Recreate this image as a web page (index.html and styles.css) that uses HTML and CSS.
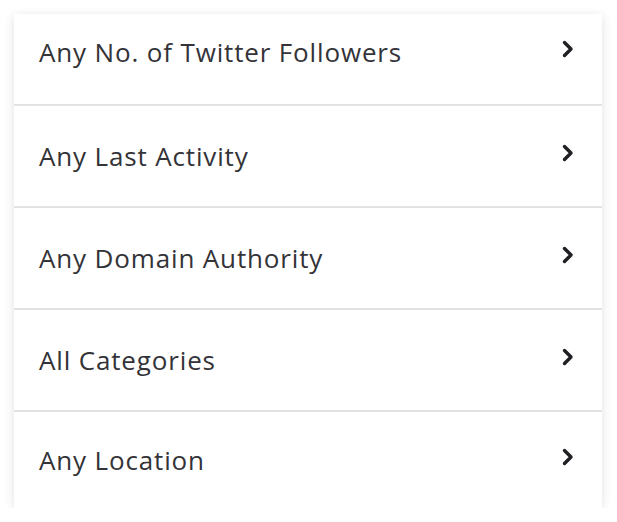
FILE: index.html
```html
<!DOCTYPE html>
<html>
<head>
<meta charset="utf-8">
<link rel="stylesheet" href="styles.css">
</head>
<body>
<ul class="filters">
  <li class="filter filter-first"><span class="label">Any No. of Twitter Followers</span><svg class="chev" viewBox="0 0 12 18"><path d="M2.5 2.5 L9 9 L2.5 15.5"/></svg></li>
  <li class="filter"><span class="label">Any Last Activity</span><svg class="chev" viewBox="0 0 12 18"><path d="M2.5 2.5 L9 9 L2.5 15.5"/></svg></li>
  <li class="filter"><span class="label">Any Domain Authority</span><svg class="chev" viewBox="0 0 12 18"><path d="M2.5 2.5 L9 9 L2.5 15.5"/></svg></li>
  <li class="filter"><span class="label">All Categories</span><svg class="chev" viewBox="0 0 12 18"><path d="M2.5 2.5 L9 9 L2.5 15.5"/></svg></li>
  <li class="filter filter-last"><span class="label">Any Location</span><svg class="chev" viewBox="0 0 12 18"><path d="M2.5 2.5 L9 9 L2.5 15.5"/></svg></li>
</ul>
</body>
</html>
```

FILE: styles.css
```css
html, body {
  margin: 0;
  padding: 0;
  background: #ffffff;
}
body {
  padding: 14px 15px 0 14px;
  font-family: "Open Sans", "Lato", sans-serif;
}
.filters {
  list-style: none;
  margin: 0;
  padding: 0;
  width: 588px;
  background: #ffffff;
  box-shadow: 0 2px 10px rgba(0, 0, 0, 0.12);
}
.filter {
  display: flex;
  align-items: center;
  justify-content: space-between;
  height: 100px;
  padding: 0 28px 0 25px;
  border-bottom: 2px solid #e2e2e2;
  box-sizing: content-box;
}
.filter-first {
  height: 76px;
  padding-bottom: 14px;
}
.filter-last {
  height: 96px;
  border-bottom: none;
}
.label {
  font-size: 26px;
  color: #333338;
  letter-spacing: 0.85px;
}
.chev {
  width: 12px;
  height: 18px;
  margin-top: -6px;
}
.chev path {
  fill: none;
  stroke: #1f1f24;
  stroke-width: 3.4;
  stroke-linecap: round;
  stroke-linejoin: round;
}
```
